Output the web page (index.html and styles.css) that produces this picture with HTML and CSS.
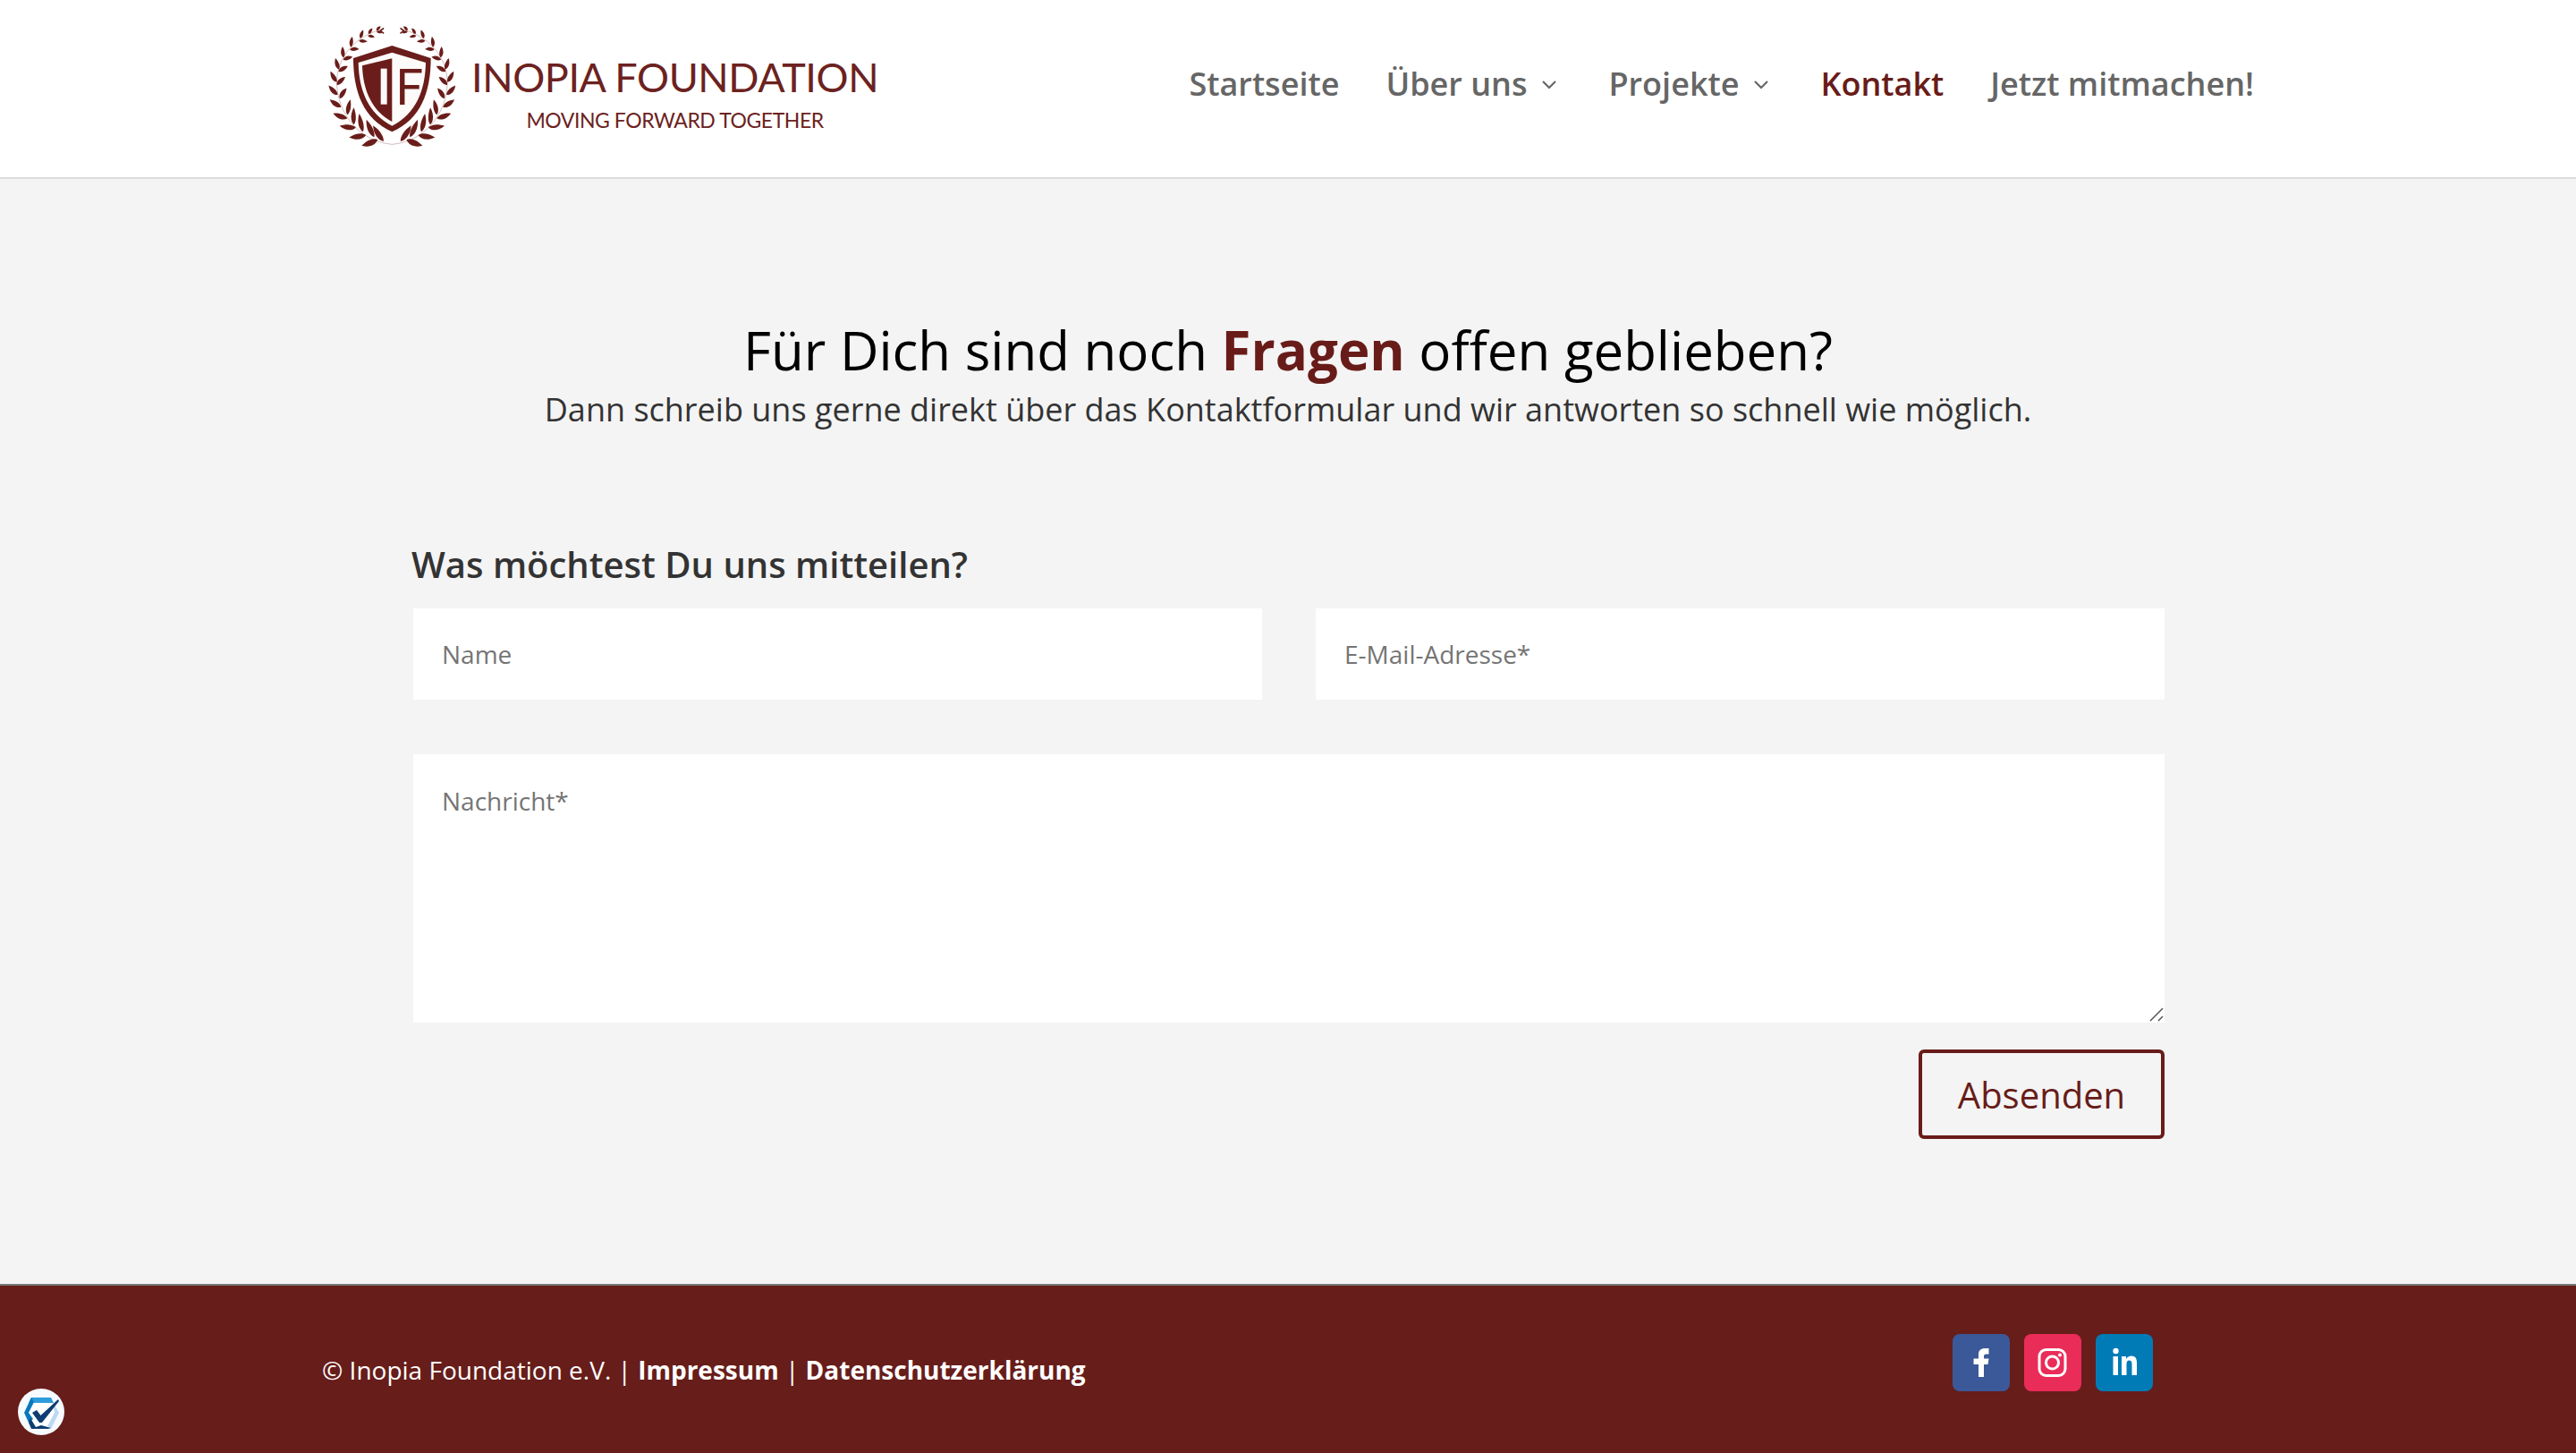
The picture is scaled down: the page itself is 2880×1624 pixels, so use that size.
FILE: index.html
```html
<!DOCTYPE html>
<html lang="de">
<head>
<meta charset="utf-8">
<title>Kontakt - Inopia Foundation</title>
<link rel="stylesheet" href="styles.css">
</head>
<body>
<header class="site-header">
  <div class="header-inner">
    <a class="logo" href="#">
      <svg class="logo-mark" viewBox="0 0 510 480" aria-hidden="true">
        <defs>
          <path id="leaf" d="M0 0C10-11 30-13 50 0C30 9 10 9 0 0Z"/>
          <g id="branch">
            <path class="stem" d="M235 424C120 415 40 320 40 215C40 130 110 55 205 38"/>
            <use href="#leaf" transform="translate(184 408) rotate(160) scale(1.2 1.3)"/>
            <use href="#leaf" transform="translate(205 414) rotate(235) scale(1.3 1.2)"/>
            <use href="#leaf" transform="translate(143 393) rotate(173) scale(1.2 1.2)"/>
            <use href="#leaf" transform="translate(172 400) rotate(245) scale(1.3 1.15)"/>
            <use href="#leaf" transform="translate(107 368) rotate(186) scale(1.15 1.15)"/>
            <use href="#leaf" transform="translate(132 382) rotate(258) scale(1.25 1.1)"/>
            <use href="#leaf" transform="translate(77 337) rotate(199) scale(1.05 1.1)"/>
            <use href="#leaf" transform="translate(100 358) rotate(270) scale(1.15 1.05)"/>
            <use href="#leaf" transform="translate(55 299) rotate(212) scale(.95 1.05)"/>
            <use href="#leaf" transform="translate(77 325) rotate(282) scale(1.05 1)"/>
            <use href="#leaf" transform="translate(43 258) rotate(225) scale(.9 1)"/>
            <use href="#leaf" transform="translate(50 270) rotate(305) scale(.85 1)"/>
            <use href="#leaf" transform="translate(40 215) rotate(238) scale(.85 .95)"/>
            <use href="#leaf" transform="translate(40 225) rotate(318) scale(.8 .95)"/>
            <use href="#leaf" transform="translate(48 173) rotate(251) scale(.8 .9)"/>
            <use href="#leaf" transform="translate(46 180) rotate(331) scale(.75 .9)"/>
            <use href="#leaf" transform="translate(64 133) rotate(264) scale(.75 .85)"/>
            <use href="#leaf" transform="translate(62 140) rotate(344) scale(.7 .85)"/>
            <use href="#leaf" transform="translate(90 98) rotate(277) scale(.7 .8)"/>
            <use href="#leaf" transform="translate(86 106) rotate(357) scale(.65 .8)"/>
            <use href="#leaf" transform="translate(123 69) rotate(290) scale(.6 .75)"/>
            <use href="#leaf" transform="translate(118 77) rotate(5) scale(.6 .7)"/>
            <use href="#leaf" transform="translate(152 54) rotate(305) scale(.48 .65)"/>
            <use href="#leaf" transform="translate(150 60) rotate(10) scale(.48 .6)"/>
            <use href="#leaf" transform="translate(180 42) rotate(318) scale(.4 .6)"/>
            <use href="#leaf" transform="translate(180 46) rotate(12) scale(.4 .55)"/>
            <path class="tip" d="M206 34L194 43L206 52"/>
          </g>
        </defs>
        <use href="#branch" transform="translate(11.75 0) scale(.95 1)"/>
        <use href="#branch" transform="translate(458.25 0) scale(-.95 1)"/>
        <path class="shield-dark" d="M235 93L365 135C365 250 330 340 235 382C140 340 105 250 105 135Z"/>
        <path class="shield-light" d="M235 116L348 150C346 245 315 320 235 362C155 320 124 245 122 150Z"/>
        <path class="shield-dark" d="M235 136V348C170 315 137 245 135 160Z"/>
        <rect class="letter-i" x="197" y="170" width="21" height="120"/>
        <text class="letter-f" x="246" y="290">F</text>
      </svg>
      <span class="logo-text">
        <span class="logo-name">INOPIA FOUNDATION</span>
        <span class="logo-tag">MOVING FORWARD TOGETHER</span>
      </span>
    </a>
    <nav class="main-nav">
      <a href="#">Startseite</a>
      <a href="#" class="has-sub">Über uns<svg class="chevron" viewBox="0 0 18 12"><path d="M2 2L9 9L16 2"/></svg></a>
      <a href="#" class="has-sub">Projekte<svg class="chevron" viewBox="0 0 18 12"><path d="M2 2L9 9L16 2"/></svg></a>
      <a href="#" class="current">Kontakt</a>
      <a href="#">Jetzt mitmachen!</a>
    </nav>
  </div>
</header>

<main class="content">
  <h1 class="title">Für Dich sind noch <strong>Fragen</strong> offen geblieben?</h1>
  <p class="subtitle">Dann schreib uns gerne direkt über das Kontaktformular und wir antworten so schnell wie möglich.</p>
  <form class="contact-form">
    <h2 class="form-label">Was möchtest Du uns mitteilen?</h2>
    <div class="fields">
      <div class="field-row">
        <input class="field" type="text" placeholder="Name">
        <input class="field" type="text" placeholder="E-Mail-Adresse*">
      </div>
      <div class="message-wrap">
        <textarea class="field message" placeholder="Nachricht*"></textarea>
        <svg class="grip" viewBox="0 0 16 16" aria-hidden="true"><path d="M1 15L15 1M10 15L15 10"/></svg>
      </div>
    </div>
    <div class="form-actions">
      <button class="submit" type="button">Absenden</button>
    </div>
  </form>
</main>

<footer class="site-footer">
  <div class="footer-inner">
    <p class="credits">© Inopia Foundation e.V. | <b>Impressum</b> | <b>Datenschutzerklärung</b></p>
    <ul class="social">
      <li class="soc soc-fb"><svg viewBox="0 0 64 64"><path d="M29 48V34H23.5V27.5H29V23C29 18 32 16 36 16H40.5V22.5H37.5C35.5 22.5 35 23.5 35 25V27.5H40.5L39.5 34H35V48Z"/></svg></li>
      <li class="soc soc-ig"><svg viewBox="0 0 64 64"><rect class="ig-line" x="17" y="17.500" width="29" height="29" rx="7.500"/><circle class="ig-line" cx="31.500" cy="32" r="7"/><circle cx="40" cy="23.500" r="2"/></svg></li>
      <li class="soc soc-in"><svg viewBox="0 0 64 64"><circle cx="22.500" cy="19" r="3.200"/><rect x="19.500" y="25" width="5.500" height="21"/><path d="M29 25H34V28C35 26 37.500 24.500 40 24.500C44.500 24.500 46 27.500 46 32V46H40.500V33.500C40.500 31 39.500 29.500 37.500 29.500C35.500 29.500 34.500 31 34.500 33.500V46H29Z"/></svg></li>
    </ul>
  </div>
</footer>

<div class="badge">
  <svg viewBox="0 0 52 52" aria-hidden="true">
    <circle cx="26" cy="26" r="26" fill="#f7fbff"/>
    <path d="M15 10H37L46 27L37 45H15L7 27Z" fill="#fff"/>
    <path d="M15 10H37L40 16H12Z" fill="#2f9bdc"/>
    <path d="M39 15L46 27L37 45L33 42L41 27Z" fill="#bcd8f2"/>
    <path d="M15 10L7 27L12 38L17 34L12 27L18 15Z" fill="#0a78bd"/>
    <path d="M12 38L15 45H34L37 44L26 41L20 43L14 33Z" fill="#0f3d73"/>
    <path d="M16 27L21 24L25.500 30L45 12L46 14L27 38H24Z" fill="#0f3d73"/>
  </svg>
</div>
</body>
</html>
```

FILE: styles.css
```css
* { box-sizing: border-box; }
html, body { margin: 0; padding: 0; }
body {
  min-height: 100vh;
  display: flex;
  flex-direction: column;
  background: #f4f4f4;
  font-family: "Open Sans", "Liberation Sans", sans-serif;
  overflow: hidden;
}
a { text-decoration: none; color: inherit; }

.site-header {
  height: 200px;
  background: #fff;
  border-bottom: 2px solid #dcdcdc;
}
.header-inner {
  width: 2160px;
  height: 198px;
  margin: 0 auto;
  display: flex;
  justify-content: space-between;
  align-items: center;
}
.logo { display: flex; align-items: center; color: #6c2220; margin-top: 2px; }
.logo-mark { width: 170px; height: 160px; fill: #6a1d1a; display: block; }
.stem { fill: none; stroke: #6a1d1a; stroke-width: 1.5; opacity: .6; }
.tip { fill: none; stroke: #6a1d1a; stroke-width: 5; }
.shield-dark { fill: #6a1d1a; }
.shield-light { fill: #fdfbf9; }
.letter-i { fill: #fdfbf9; }
.letter-f { font-family: "Lato", sans-serif; font-size: 166px; font-weight: 400; fill: #6a1d1a; }
.logo-text { display: flex; flex-direction: column; align-items: center; margin: 9px 0 0 -3px; }
.logo-name { font-family: "Lato", sans-serif; font-weight: 400; font-size: 45px; letter-spacing: -.4px; line-height: 46px; white-space: nowrap; }
.logo-tag { font-family: "Lato", sans-serif; font-weight: 400; font-size: 23px; letter-spacing: -.45px; line-height: 26px; margin-top: 12px; white-space: nowrap; }

.main-nav {
  display: flex;
  gap: 52px;
  font-size: 36px;
  font-weight: 600;
  color: #666;
  margin-top: -12px;
}
.main-nav a { display: flex; align-items: center; white-space: nowrap; }
.main-nav .current { color: #681c19; }
.chevron { width: 18px; height: 12px; margin: 4px 5px 0 16px; }
.chevron path { fill: none; stroke: #666; stroke-width: 2.2; }

.content { flex: 1; width: 1960px; margin: 0 auto; }
.title {
  margin: 155px 0 0;
  font-size: 60px;
  line-height: 72px;
  font-weight: 400;
  color: #000;
  text-align: center;
}
.title strong { color: #681c19; font-weight: 700; }
.subtitle {
  margin: 6px 0 0;
  font-size: 36px;
  line-height: 50px;
  color: #333;
  text-align: center;
}
.contact-form { margin-top: 123px; }
.form-label {
  margin: 0 0 24px;
  font-size: 40px;
  line-height: 50px;
  font-weight: 600;
  color: #333;
}
.fields { padding-left: 2px; }
.field-row { display: flex; gap: 60px; }
.field {
  display: block;
  width: 100%;
  border: 0;
  background: #fff;
  padding: 0 32px;
  font-family: "Open Sans", sans-serif;
  font-size: 28px;
  color: #666;
  height: 102px;
  border-radius: 0;
  outline: none;
}
.field::placeholder { color: #757575; opacity: 1; }
.message-wrap { position: relative; margin-top: 61px; }
.message { height: 300px; padding: 33px 32px; line-height: 38px; resize: none; }
.grip {
  position: absolute;
  right: 1px;
  bottom: 1px;
  width: 16px;
  height: 16px;
  pointer-events: none;
}
.grip path { fill: none; stroke: #555; stroke-width: 1.5; }
.form-actions { display: flex; justify-content: flex-end; margin-top: 30px; }
.submit {
  width: 275px;
  height: 100px;
  border: 4px solid #681c19;
  border-radius: 6px;
  background: transparent;
  color: #681c19;
  font-family: "Open Sans", sans-serif;
  font-size: 40px;
  padding: 0;
}

.site-footer {
  height: 189px;
  background: #671d1a;
  border-top: 2px solid #777;
}
.footer-inner {
  width: 2160px;
  margin: 0 auto;
  padding-top: 54px;
  display: flex;
  justify-content: space-between;
  align-items: flex-start;
  color: #fff;
}
.credits { margin: 0; font-size: 28px; line-height: 40px; padding-top: 20px; }
.credits b { font-weight: 700; }
.social { list-style: none; margin: 0 113px 0 0; padding: 0; display: flex; gap: 16px; }
.soc { width: 64px; height: 64px; border-radius: 8px; }
.soc svg { width: 64px; height: 64px; display: block; fill: #fff; }
.soc-fb { background: #3b5998; }
.soc-ig { background: #ea2c59; }
.soc-in { background: #007bb6; }
.ig-line { fill: none; stroke: #fff; stroke-width: 3; }

.badge { position: fixed; left: 20px; bottom: 20px; width: 52px; height: 52px; }
.badge svg { width: 52px; height: 52px; display: block; }
```
